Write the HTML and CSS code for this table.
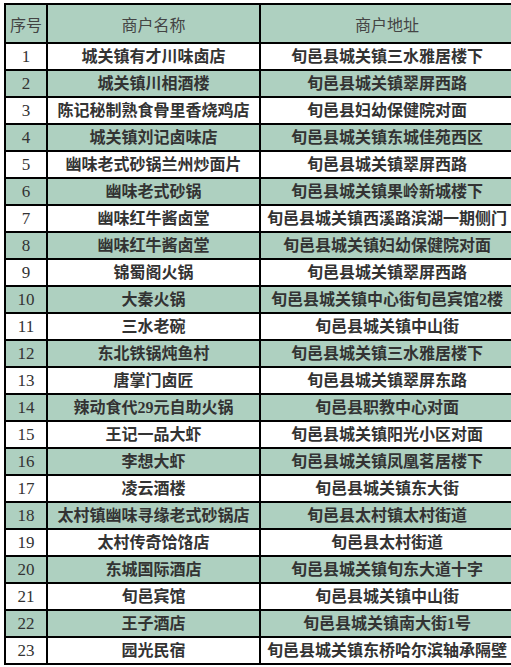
FILE: index.html
```html
<!DOCTYPE html>
<html lang="zh">
<head>
<meta charset="utf-8">
<link rel="stylesheet" href="styles.css">
</head>
<body>
<table class="list">
<thead>
<tr><th class="c1">序号</th><th class="c2">商户名称</th><th class="c3">商户地址</th></tr>
</thead>
<tbody>
<tr><td>1</td><td>城关镇有才川味卤店</td><td>旬邑县城关镇三水雅居楼下</td></tr>
<tr class="alt"><td>2</td><td>城关镇川相酒楼</td><td>旬邑县城关镇翠屏西路</td></tr>
<tr><td>3</td><td>陈记秘制熟食骨里香烧鸡店</td><td>旬邑县妇幼保健院对面</td></tr>
<tr class="alt"><td>4</td><td>城关镇刘记卤味店</td><td>旬邑县城关镇东城佳苑西区</td></tr>
<tr><td>5</td><td>幽味老式砂锅兰州炒面片</td><td>旬邑县城关镇翠屏西路</td></tr>
<tr class="alt"><td>6</td><td>幽味老式砂锅</td><td>旬邑县城关镇果岭新城楼下</td></tr>
<tr><td>7</td><td>幽味红牛酱卤堂</td><td>旬邑县城关镇西溪路滨湖一期侧门</td></tr>
<tr class="alt"><td>8</td><td>幽味红牛酱卤堂</td><td>旬邑县城关镇妇幼保健院对面</td></tr>
<tr><td>9</td><td>锦蜀阁火锅</td><td>旬邑县城关镇翠屏西路</td></tr>
<tr class="alt"><td>10</td><td>大秦火锅</td><td>旬邑县城关镇中心街旬邑宾馆2楼</td></tr>
<tr><td>11</td><td>三水老碗</td><td>旬邑县城关镇中山街</td></tr>
<tr class="alt"><td>12</td><td>东北铁锅炖鱼村</td><td>旬邑县城关镇三水雅居楼下</td></tr>
<tr><td>13</td><td>唐掌门卤匠</td><td>旬邑县城关镇翠屏东路</td></tr>
<tr class="alt"><td>14</td><td>辣动食代29元自助火锅</td><td>旬邑县职教中心对面</td></tr>
<tr><td>15</td><td>王记一品大虾</td><td>旬邑县城关镇阳光小区对面</td></tr>
<tr class="alt"><td>16</td><td>李想大虾</td><td>旬邑县城关镇凤凰茗居楼下</td></tr>
<tr><td>17</td><td>凌云酒楼</td><td>旬邑县城关镇东大街</td></tr>
<tr class="alt"><td>18</td><td>太村镇幽味寻缘老式砂锅店</td><td>旬邑县太村镇太村街道</td></tr>
<tr><td>19</td><td>太村传奇饸饹店</td><td>旬邑县太村街道</td></tr>
<tr class="alt"><td>20</td><td>东城国际酒店</td><td>旬邑县城关镇旬东大道十字</td></tr>
<tr><td>21</td><td>旬邑宾馆</td><td>旬邑县城关镇中山街</td></tr>
<tr class="alt"><td>22</td><td>王子酒店</td><td>旬邑县城关镇南大街1号</td></tr>
<tr><td>23</td><td>园光民宿</td><td>旬邑县城关镇东桥哈尔滨轴承隔壁</td></tr>
</tbody>
</table>
</body>
</html>
```
FILE: styles.css
```css
html, body {
  margin: 0;
  padding: 0;
  background: #ffffff;
}
body {
  padding: 3px 0 0 4px;
}
.list {
  border-collapse: collapse;
  width: 503px;
  table-layout: fixed;
  font-family: "Liberation Serif", "Noto Sans CJK SC", serif;
  color: #333333;
}
.list th, .list td {
  border: 2px solid #000000;
  text-align: center;
  padding: 0;
  white-space: nowrap;
  overflow: hidden;
}
.list th {
  height: 37px;
  background: #aed0c0;
  font-weight: 400;
  font-size: 16px;
  color: #444444;
}
.list td {
  height: 25px;
  font-size: 16px;
  font-weight: 700;
  line-height: 20px;
}
.list td:first-child {
  font-weight: 400;
  font-size: 17px;
}
.c1 { width: 40px; }
.c2 { width: 211px; }
.c3 { width: 252px; }
.list tr.alt td {
  background: #aed0c0;
}
```
